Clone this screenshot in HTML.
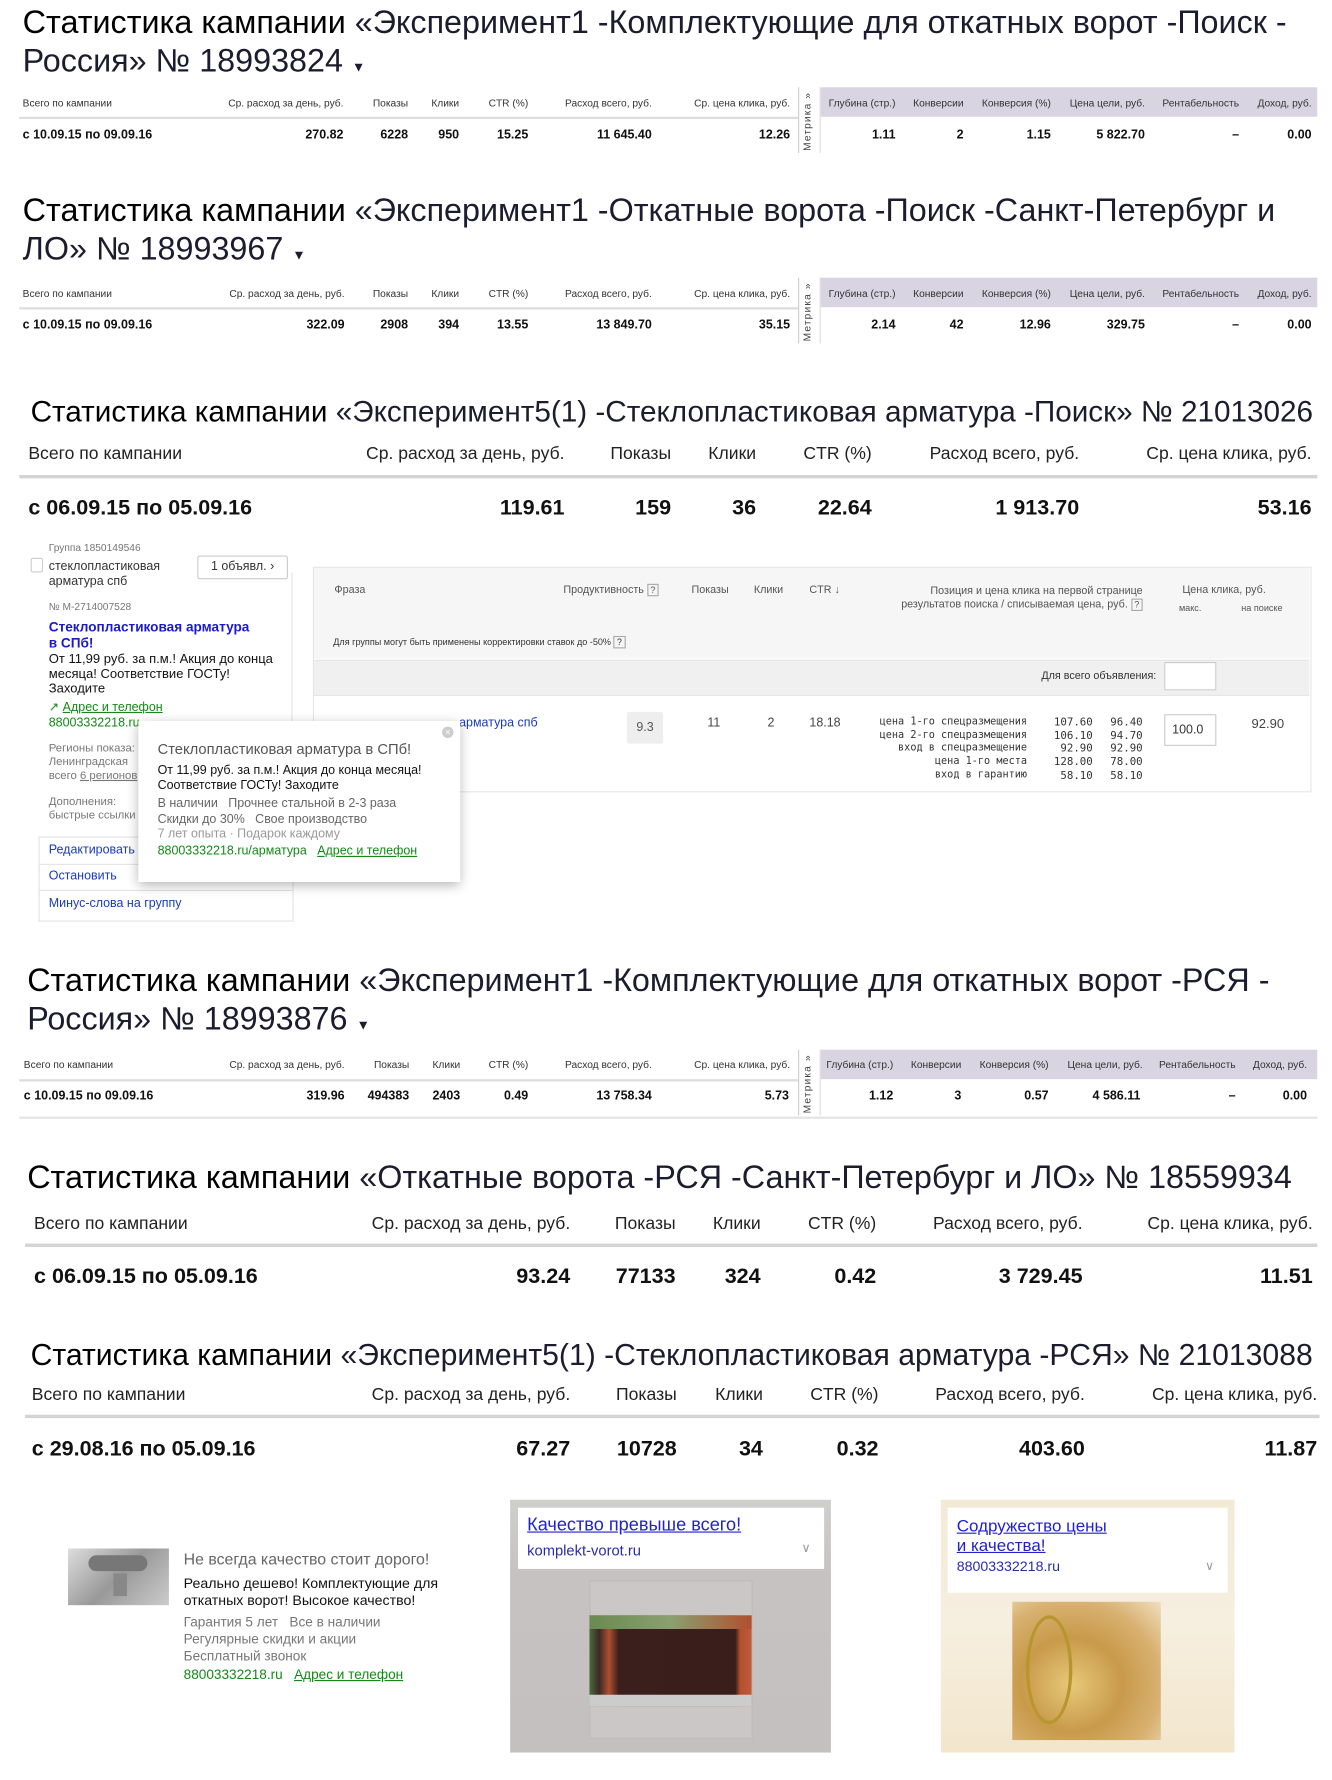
<!DOCTYPE html>
<html><head><meta charset="utf-8">
<style>
html,body{margin:0;padding:0;background:#fff;width:1332px;height:1779px;overflow:hidden}
#w{position:absolute;left:0;top:0;width:1175px;height:1570px;transform:scale(1.1336);transform-origin:0 0;font-family:"Liberation Sans","DejaVu Sans",sans-serif;color:#222}
.a{position:absolute;white-space:nowrap;line-height:1}
.r{text-align:right;width:200px}
.t{font-size:28.5px;color:#1c1c2e;line-height:34px;white-space:normal}
.t b{font-weight:normal;color:#000}
.t2{font-size:26.2px;color:#1c1c2e}
.t2 b{font-weight:normal;color:#000}
.sh{font-size:9px;color:#333}
.sd{font-size:11px;font-weight:bold;color:#111}
.bh{font-size:15.5px;color:#222}
.bd{font-size:19px;font-weight:bold;color:#111}
.ln{position:absolute;height:0;border-top:1px solid #ccc}
.lnb{position:absolute;height:3px;background:#d4d4d4}
.pur{position:absolute;background:#d8d4e2}
.met{position:absolute;width:18px;border-left:1px solid #ccc;border-right:1px solid #ddd;background:#fff}
.met span{position:absolute;left:2px;top:4px;writing-mode:vertical-rl;transform:rotate(180deg);font-size:9px;color:#444;letter-spacing:1px}
.bl{color:#1a3bb5}
.gr{color:#138a16}
.g{color:#777}
.u{text-decoration:underline}
</style></head><body><div id="w">

<!-- Section 1 -->
<div class="a t" style="left:20px;top:3px;width:1150px;white-space:nowrap"><b>Статистика кампании</b> «Эксперимент1 -Комплектующие для откатных ворот -Поиск -<br>Россия» № 18993824 <span style="font-size:12px">▼</span></div>
<div class="pur" style="left:722px;top:77px;width:440px;height:26px"></div>
<div class="met" style="left:704px;top:77px;height:58px"><span>Метрика »</span></div>
<div class="ln" style="left:17px;top:103px;width:687px;border-top:2px solid #ddd"></div>
<div class="a sh" style="left:20px;top:87px">Всего по кампании</div>
<div class="a sh r" style="left:103px;top:87px">Ср. расход за день, руб.</div>
<div class="a sh r" style="left:160px;top:87px">Показы</div>
<div class="a sh r" style="left:205px;top:87px">Клики</div>
<div class="a sh r" style="left:266px;top:87px">CTR (%)</div>
<div class="a sh r" style="left:375px;top:87px">Расход всего, руб.</div>
<div class="a sh r" style="left:497px;top:87px">Ср. цена клика, руб.</div>
<div class="a sh r" style="left:590px;top:87px">Глубина (стр.)</div>
<div class="a sh r" style="left:650px;top:87px">Конверсии</div>
<div class="a sh r" style="left:727px;top:87px">Конверсия (%)</div>
<div class="a sh r" style="left:810px;top:87px">Цена цели, руб.</div>
<div class="a sh r" style="left:893px;top:87px">Рентабельность</div>
<div class="a sh r" style="left:957px;top:87px">Доход, руб.</div>
<div class="a sd" style="left:20px;top:114px">с 10.09.15 по 09.09.16</div>
<div class="a sd r" style="left:103px;top:114px">270.82</div>
<div class="a sd r" style="left:160px;top:114px">6228</div>
<div class="a sd r" style="left:205px;top:114px">950</div>
<div class="a sd r" style="left:266px;top:114px">15.25</div>
<div class="a sd r" style="left:375px;top:114px">11 645.40</div>
<div class="a sd r" style="left:497px;top:114px">12.26</div>
<div class="a sd r" style="left:590px;top:114px">1.11</div>
<div class="a sd r" style="left:650px;top:114px">2</div>
<div class="a sd r" style="left:727px;top:114px">1.15</div>
<div class="a sd r" style="left:810px;top:114px">5 822.70</div>
<div class="a sd r" style="left:893px;top:114px">–</div>
<div class="a sd r" style="left:957px;top:114px">0.00</div>

<!-- Section 2 -->
<div class="a t" style="left:20px;top:169px;width:1150px"><b>Статистика кампании</b> «Эксперимент1 -Откатные ворота -Поиск -Санкт-Петербург и ЛО» № 18993967 <span style="font-size:12px">▼</span></div>
<div class="pur" style="left:722px;top:245px;width:440px;height:26px"></div>
<div class="met" style="left:704px;top:245px;height:58px"><span>Метрика »</span></div>
<div class="ln" style="left:17px;top:271px;width:687px;border-top:2px solid #ddd"></div>
<div class="a sh" style="left:20px;top:255px">Всего по кампании</div>
<div class="a sh r" style="left:104px;top:255px">Ср. расход за день, руб.</div>
<div class="a sh r" style="left:160px;top:255px">Показы</div>
<div class="a sh r" style="left:205px;top:255px">Клики</div>
<div class="a sh r" style="left:266px;top:255px">CTR (%)</div>
<div class="a sh r" style="left:375px;top:255px">Расход всего, руб.</div>
<div class="a sh r" style="left:497px;top:255px">Ср. цена клика, руб.</div>
<div class="a sh r" style="left:590px;top:255px">Глубина (стр.)</div>
<div class="a sh r" style="left:650px;top:255px">Конверсии</div>
<div class="a sh r" style="left:727px;top:255px">Конверсия (%)</div>
<div class="a sh r" style="left:810px;top:255px">Цена цели, руб.</div>
<div class="a sh r" style="left:893px;top:255px">Рентабельность</div>
<div class="a sh r" style="left:957px;top:255px">Доход, руб.</div>
<div class="a sd" style="left:20px;top:282px">с 10.09.15 по 09.09.16</div>
<div class="a sd r" style="left:104px;top:282px">322.09</div>
<div class="a sd r" style="left:160px;top:282px">2908</div>
<div class="a sd r" style="left:205px;top:282px">394</div>
<div class="a sd r" style="left:266px;top:282px">13.55</div>
<div class="a sd r" style="left:375px;top:282px">13 849.70</div>
<div class="a sd r" style="left:497px;top:282px">35.15</div>
<div class="a sd r" style="left:590px;top:282px">2.14</div>
<div class="a sd r" style="left:650px;top:282px">42</div>
<div class="a sd r" style="left:727px;top:282px">12.96</div>
<div class="a sd r" style="left:810px;top:282px">329.75</div>
<div class="a sd r" style="left:893px;top:282px">–</div>
<div class="a sd r" style="left:957px;top:282px">0.00</div>

<!-- Section 3 -->
<div class="a t2" style="left:27px;top:350px"><b>Статистика кампании</b> «Эксперимент5(1) -Стеклопластиковая арматура -Поиск» № 21013026</div>
<div class="a bh" style="left:25px;top:393px">Всего по кампании</div>
<div class="a bh r" style="left:298px;top:393px">Ср. расход за день, руб.</div>
<div class="a bh r" style="left:392px;top:393px">Показы</div>
<div class="a bh r" style="left:467px;top:393px">Клики</div>
<div class="a bh r" style="left:569px;top:393px">CTR (%)</div>
<div class="a bh r" style="left:752px;top:393px">Расход всего, руб.</div>
<div class="a bh r" style="left:957px;top:393px">Ср. цена клика, руб.</div>
<div class="lnb" style="left:17px;top:419px;width:1145px"></div>
<div class="a bd" style="left:25px;top:439px">с 06.09.15 по 05.09.16</div>
<div class="a bd r" style="left:298px;top:439px">119.61</div>
<div class="a bd r" style="left:392px;top:439px">159</div>
<div class="a bd r" style="left:467px;top:439px">36</div>
<div class="a bd r" style="left:569px;top:439px">22.64</div>
<div class="a bd r" style="left:752px;top:439px">1 913.70</div>
<div class="a bd r" style="left:957px;top:439px">53.16</div>

<!-- Section 4: ad group -->
<div class="a g" style="left:43px;top:479px;font-size:9px">Группа 1850149546</div>
<div class="a" style="left:27px;top:492px;width:9px;height:11px;border:1px solid #ccc;border-radius:2px"></div>
<div class="a" style="left:43px;top:494px;font-size:11px;color:#333;line-height:13px">стеклопластиковая<br>арматура спб</div>
<div class="a" style="left:174px;top:490px;width:78px;height:19px;border:1px solid #ccc;border-radius:2px;font-size:11px;text-align:center;line-height:19px;color:#333">1 объявл. ›</div>
<div class="a" style="left:257px;top:505px;width:0;height:235px;border-left:1px solid #e4e4e4"></div>
<div class="a g" style="left:43px;top:531px;font-size:9px">№ M-2714007528</div>
<div class="a bl" style="left:43px;top:546px;font-size:12px;font-weight:bold;line-height:14px;color:#1a1acc">Стеклопластиковая арматура<br>в СПб!</div>
<div class="a" style="left:43px;top:576px;font-size:11.5px;line-height:13px;color:#111">От 11,99 руб. за п.м.! Акция до конца<br>месяца! Соответствие ГОСТу!<br>Заходите</div>
<div class="a gr" style="left:43px;top:619px;font-size:11px">↗ <span class="u">Адрес и телефон</span></div>
<div class="a gr" style="left:43px;top:633px;font-size:11px">88003332218.ru</div>
<div class="a g" style="left:43px;top:655px;font-size:10px;line-height:12px">Регионы показа:<br>Ленинградская<br>всего <span class="u">6 регионов</span></div>
<div class="a g" style="left:43px;top:702px;font-size:10px;line-height:12px">Дополнения:<br>быстрые ссылки</div>
<div class="a" style="left:34px;top:738px;width:223px;height:74px;border:1px solid #e4e4e4;border-top:none"></div>
<div class="ln" style="left:34px;top:738px;width:224px;border-color:#e4e4e4"></div>
<div class="ln" style="left:34px;top:762px;width:224px;border-color:#e4e4e4"></div>
<div class="ln" style="left:34px;top:785px;width:224px;border-color:#e4e4e4"></div>
<div class="a bl" style="left:43px;top:745px;font-size:11px">Редактировать</div>
<div class="a bl" style="left:43px;top:768px;font-size:11px">Остановить</div>
<div class="a bl" style="left:43px;top:792px;font-size:11px">Минус-слова на группу</div>

<div class="a" style="left:276px;top:500px;width:879px;height:197px;border:1px solid #e6e6e6;background:#fff"></div>
<div class="a" style="left:277px;top:501px;width:878px;height:80px;background:#f6f6f6"></div>
<div class="a" style="left:277px;top:582px;width:878px;height:30px;background:#f0f0f0;border-top:1px solid #e6e6e6;border-bottom:1px solid #e6e6e6"></div>
<div class="a g" style="left:295px;top:516px;font-size:9.5px;color:#555">Фраза</div>
<div class="a" style="left:497px;top:516px;font-size:9.5px;color:#555">Продуктивность <span style="border:1px solid #aaa;font-size:8px;padding:0 2px">?</span></div>
<div class="a" style="left:610px;top:516px;font-size:9.5px;color:#555">Показы</div>
<div class="a" style="left:665px;top:516px;font-size:9.5px;color:#555">Клики</div>
<div class="a" style="left:714px;top:516px;font-size:9.5px;color:#555">CTR ↓</div>
<div class="a" style="left:708px;top:516px;width:300px;text-align:right;font-size:9.5px;color:#555;line-height:12px">Позиция и цена клика на первой странице<br>результатов поиска / списываемая цена, руб. <span style="border:1px solid #aaa;font-size:8px;padding:0 2px">?</span></div>
<div class="a" style="left:1043px;top:516px;font-size:9.5px;color:#555">Цена клика, руб.</div>
<div class="a" style="left:1040px;top:533px;font-size:8px;color:#555">макс.</div>
<div class="a" style="left:1095px;top:533px;font-size:8px;color:#555">на поиске</div>
<div class="a" style="left:294px;top:563px;font-size:8px;color:#333">Для группы могут быть применены корректировки ставок до -50% <span style="border:1px solid #aaa;padding:0 2px">?</span></div>
<div class="a" style="left:820px;top:592px;width:200px;text-align:right;font-size:9.5px;color:#333">Для всего объявления:</div>
<div class="a" style="left:1027px;top:584px;width:44px;height:23px;background:#fff;border:1px solid #ccc"></div>
<div class="a bl" style="left:405px;top:633px;font-size:11px">арматура спб</div>
<div class="a" style="left:553px;top:628px;width:32px;height:28px;background:#eee;border-radius:2px;font-size:11px;text-align:center;line-height:28px;color:#555">9.3</div>
<div class="a" style="left:624px;top:633px;font-size:11px;color:#444">11</div>
<div class="a" style="left:677px;top:633px;font-size:11px;color:#444">2</div>
<div class="a" style="left:714px;top:633px;font-size:11px;color:#444">18.18</div>
<div class="a" style="left:706px;top:632px;width:200px;text-align:right;font-family:'DejaVu Sans Mono','Liberation Mono',monospace;font-size:9px;line-height:11.7px;color:#333">цена 1-го спецразмещения<br>цена 2-го спецразмещения<br>вход в спецразмещение<br>цена 1-го места<br>вход в гарантию</div>
<div class="a" style="left:904px;top:632px;width:60px;text-align:right;font-family:'DejaVu Sans Mono','Liberation Mono',monospace;font-size:9.5px;line-height:11.7px;color:#333">107.60<br>106.10<br>92.90<br>128.00<br>58.10</div>
<div class="a" style="left:948px;top:632px;width:60px;text-align:right;font-family:'DejaVu Sans Mono','Liberation Mono',monospace;font-size:9.5px;line-height:11.7px;color:#333">96.40<br>94.70<br>92.90<br>78.00<br>58.10</div>
<div class="a" style="left:1027px;top:630px;width:44px;height:26px;background:#fff;border:1px solid #ccc;font-size:11px;line-height:26px;text-indent:6px;color:#333">100.0</div>
<div class="a" style="left:1104px;top:634px;font-size:11.5px;color:#444">92.90</div>

<!-- popup -->
<div class="a" style="left:122px;top:636px;width:284px;height:142px;background:#fff;box-shadow:0 3px 10px rgba(0,0,0,.3)"></div>
<div class="a" style="left:390px;top:641px;width:10px;height:10px;border-radius:50%;background:#ccc;color:#fff;font-size:9px;text-align:center;line-height:10px">×</div>
<div class="a" style="left:139px;top:654px;font-size:13px;color:#555">Стеклопластиковая арматура в СПб!</div>
<div class="a" style="left:139px;top:674px;font-size:11px;line-height:13px;color:#111">От 11,99 руб. за п.м.! Акция до конца месяца!<br>Соответствие ГОСТу! Заходите</div>
<div class="a" style="left:139px;top:703px;font-size:11px;line-height:13.5px;color:#666">В наличии&nbsp;&nbsp; Прочнее стальной в 2-3 раза<br>Скидки до 30%&nbsp;&nbsp; Свое производство<br><span style="color:#999">7 лет опыта · Подарок каждому</span></div>
<div class="a gr" style="left:139px;top:746px;font-size:11px">88003332218.ru/арматура&nbsp;&nbsp; <span class="u">Адрес и телефон</span></div>

<!-- Section 5 -->
<div class="a t" style="left:24px;top:848px;width:1150px;white-space:nowrap"><b>Статистика кампании</b> «Эксперимент1 -Комплектующие для откатных ворот -РСЯ -<br>Россия» № 18993876 <span style="font-size:12px">▼</span></div>
<div class="pur" style="left:722px;top:926px;width:440px;height:26px"></div>
<div class="met" style="left:704px;top:926px;height:58px"><span>Метрика »</span></div>
<div class="ln" style="left:17px;top:952px;width:687px;border-top:2px solid #ddd"></div>
<div class="ln" style="left:17px;top:985px;width:1145px;border-top:2px solid #e4e4e4"></div>
<div class="a sh" style="left:21px;top:935px">Всего по кампании</div>
<div class="a sh r" style="left:104px;top:935px">Ср. расход за день, руб.</div>
<div class="a sh r" style="left:161px;top:935px">Показы</div>
<div class="a sh r" style="left:206px;top:935px">Клики</div>
<div class="a sh r" style="left:266px;top:935px">CTR (%)</div>
<div class="a sh r" style="left:375px;top:935px">Расход всего, руб.</div>
<div class="a sh r" style="left:497px;top:935px">Ср. цена клика, руб.</div>
<div class="a sh r" style="left:588px;top:935px">Глубина (стр.)</div>
<div class="a sh r" style="left:648px;top:935px">Конверсии</div>
<div class="a sh r" style="left:725px;top:935px">Конверсия (%)</div>
<div class="a sh r" style="left:808px;top:935px">Цена цели, руб.</div>
<div class="a sh r" style="left:890px;top:935px">Рентабельность</div>
<div class="a sh r" style="left:953px;top:935px">Доход, руб.</div>
<div class="a sd" style="left:21px;top:962px">с 10.09.15 по 09.09.16</div>
<div class="a sd r" style="left:104px;top:962px">319.96</div>
<div class="a sd r" style="left:161px;top:962px">494383</div>
<div class="a sd r" style="left:206px;top:962px">2403</div>
<div class="a sd r" style="left:266px;top:962px">0.49</div>
<div class="a sd r" style="left:375px;top:962px">13 758.34</div>
<div class="a sd r" style="left:496px;top:962px">5.73</div>
<div class="a sd r" style="left:588px;top:962px">1.12</div>
<div class="a sd r" style="left:648px;top:962px">3</div>
<div class="a sd r" style="left:725px;top:962px">0.57</div>
<div class="a sd r" style="left:806px;top:962px">4 586.11</div>
<div class="a sd r" style="left:890px;top:962px">–</div>
<div class="a sd r" style="left:953px;top:962px">0.00</div>

<!-- Section 6 -->
<div class="a t2" style="left:24px;top:1025px;font-size:28.5px"><b>Статистика кампании</b> «Откатные ворота -РСЯ -Санкт-Петербург и ЛО» № 18559934</div>
<div class="a bh" style="left:30px;top:1072px">Всего по кампании</div>
<div class="a bh r" style="left:303px;top:1072px">Ср. расход за день, руб.</div>
<div class="a bh r" style="left:396px;top:1072px">Показы</div>
<div class="a bh r" style="left:471px;top:1072px">Клики</div>
<div class="a bh r" style="left:573px;top:1072px">CTR (%)</div>
<div class="a bh r" style="left:755px;top:1072px">Расход всего, руб.</div>
<div class="a bh r" style="left:958px;top:1072px">Ср. цена клика, руб.</div>
<div class="lnb" style="left:22px;top:1097px;width:1140px"></div>
<div class="a bd" style="left:30px;top:1117px">с 06.09.15 по 05.09.16</div>
<div class="a bd r" style="left:303px;top:1117px">93.24</div>
<div class="a bd r" style="left:396px;top:1117px">77133</div>
<div class="a bd r" style="left:471px;top:1117px">324</div>
<div class="a bd r" style="left:573px;top:1117px">0.42</div>
<div class="a bd r" style="left:755px;top:1117px">3 729.45</div>
<div class="a bd r" style="left:958px;top:1117px">11.51</div>

<!-- Section 7 -->
<div class="a t2" style="left:27px;top:1182px;font-size:26.6px"><b>Статистика кампании</b> «Эксперимент5(1) -Стеклопластиковая арматура -РСЯ» № 21013088</div>
<div class="a bh" style="left:28px;top:1223px">Всего по кампании</div>
<div class="a bh r" style="left:303px;top:1223px">Ср. расход за день, руб.</div>
<div class="a bh r" style="left:397px;top:1223px">Показы</div>
<div class="a bh r" style="left:473px;top:1223px">Клики</div>
<div class="a bh r" style="left:575px;top:1223px">CTR (%)</div>
<div class="a bh r" style="left:757px;top:1223px">Расход всего, руб.</div>
<div class="a bh r" style="left:962px;top:1223px">Ср. цена клика, руб.</div>
<div class="lnb" style="left:22px;top:1248px;width:1142px"></div>
<div class="a bd" style="left:28px;top:1269px">с 29.08.16 по 05.09.16</div>
<div class="a bd r" style="left:303px;top:1269px">67.27</div>
<div class="a bd r" style="left:397px;top:1269px">10728</div>
<div class="a bd r" style="left:473px;top:1269px">34</div>
<div class="a bd r" style="left:575px;top:1269px">0.32</div>
<div class="a bd r" style="left:757px;top:1269px">403.60</div>
<div class="a bd r" style="left:962px;top:1269px">11.87</div>

<!-- Ads -->
<div class="a" style="left:60px;top:1366px;width:89px;height:50px;background:linear-gradient(135deg,#ddd,#999 50%,#ccc)"></div>
<div class="a" style="left:78px;top:1372px;width:52px;height:14px;border-radius:7px;background:#777"></div>
<div class="a" style="left:100px;top:1388px;width:12px;height:20px;background:#888"></div>
<div class="a" style="left:162px;top:1368px;font-size:14px;color:#666">Не всегда качество стоит дорого!</div>
<div class="a" style="left:162px;top:1390px;font-size:12.5px;line-height:15px;color:#111">Реально дешево! Комплектующие для<br>откатных ворот! Высокое качество!</div>
<div class="a" style="left:162px;top:1424px;font-size:12px;line-height:15px;color:#777">Гарантия 5 лет&nbsp;&nbsp; Все в наличии<br>Регулярные скидки и акции<br>Бесплатный звонок</div>
<div class="a gr" style="left:162px;top:1471px;font-size:12px">88003332218.ru&nbsp;&nbsp; <span class="u">Адрес и телефон</span></div>

<div class="a" style="left:450px;top:1323px;width:283px;height:223px;background:linear-gradient(180deg,#cfcfcb,#c6c2c2 30%,#c4c0c0)"></div>
<div class="a" style="left:457px;top:1330px;width:270px;height:54px;background:#fff"></div>
<div class="a u" style="left:465px;top:1338px;font-size:16px;color:#2222cc">Качество превыше всего!</div>
<div class="a" style="left:465px;top:1361px;font-size:13px;color:#2a2ab0">komplekt-vorot.ru</div>
<div class="a" style="left:707px;top:1361px;font-size:11px;color:#999">∨</div>
<div class="a" style="left:520px;top:1394px;width:142px;height:138px;background:#cbc7c7;border:1px solid #bbb"></div>
<div class="a" style="left:520px;top:1425px;width:143px;height:80px;background:linear-gradient(90deg,#4a6a3a 0,#3a2a26 6%,#b05030 12%,#3b1f1c 18%,#3a1e1b 90%,#b4502e 93%,#c05a38 100%)"></div>
<div class="a" style="left:520px;top:1425px;width:143px;height:12px;background:linear-gradient(90deg,#6a8a50,#8aa070 50%,#b05030)"></div>
<div class="a" style="left:520px;top:1495px;width:143px;height:10px;background:#ccc"></div>

<div class="a" style="left:830px;top:1323px;width:259px;height:223px;background:linear-gradient(180deg,#f3ead6,#f6eedf 50%,#f2e6cc)"></div>
<div class="a" style="left:836px;top:1330px;width:247px;height:75px;background:#fff"></div>
<div class="a u" style="left:844px;top:1338px;font-size:15px;line-height:17px;color:#2222cc">Содружество цены<br>и качества!</div>
<div class="a" style="left:844px;top:1376px;font-size:12.5px;color:#2a2ab0">88003332218.ru</div>
<div class="a" style="left:1063px;top:1377px;font-size:11px;color:#999">∨</div>
<div class="a" style="left:893px;top:1413px;width:131px;height:122px;background:radial-gradient(ellipse at 40% 60%,#e8c87a,#c89a4a 40%,#d8b070 70%,#efe0c0)"></div>
<div class="a" style="left:905px;top:1425px;width:35px;height:90px;border:3px solid #b8962e;border-radius:50%"></div>

</div></body></html>
